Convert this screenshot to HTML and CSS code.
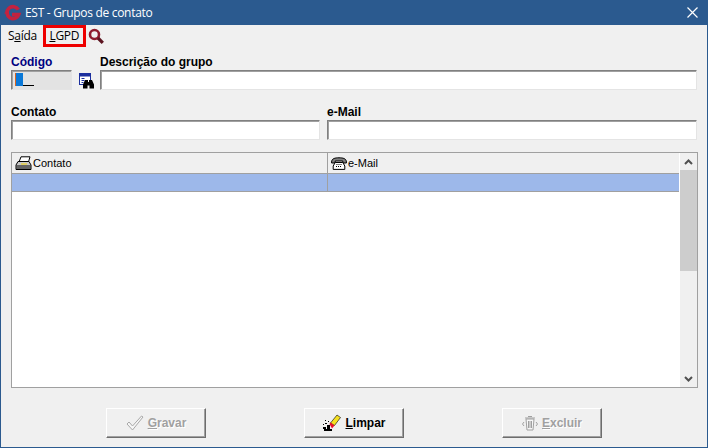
FILE: index.html
```html
<!DOCTYPE html>
<html lang="pt">
<head>
  <meta charset="UTF-8" />
  <title>EST - Grupos de contato</title>
  <link rel="stylesheet" href="styles.css">
</head>
<body>
  <div class="window">
    <div class="titlebar">
      <svg class="app-logo" width="18" height="18" viewBox="0 0 18 18">
        <path d="M15.300 5.600 A6 6 0 1 0 15.800 10.500 L9 10.500" fill="none" stroke="#c4223f" stroke-width="3.600"/>
        <path d="M1 9.500 L6 3.500 L6 9.500 Z" fill="#c4223f"/>
      </svg>
      <span class="title-text">EST - Grupos de contato</span>
      <svg class="close-icon" width="11" height="11" viewBox="0 0 11 11">
        <path d="M.5.5l10 10M10.5.5l-10 10" stroke="#fff" stroke-width="1.2" fill="none"/>
      </svg>
    </div>

    <div class="content">
      <div class="menu">
        <span class="menu-item">S<u>a</u>ída</span>
        <span class="menu-item boxed"><u>L</u>GPD</span>
        <svg class="search-icon" width="16" height="16" viewBox="0 0 16 16">
          <circle cx="6.500" cy="6.500" r="4.500" fill="none" stroke="#8e1c2e" stroke-width="2.600"/>
          <path d="M10 10l4.800 4.800" stroke="#5c1420" stroke-width="3.200"/>
        </svg>
      </div>

      <div class="form-row first">
        <div class="field codigo">
          <label class="label navy">Código</label>
          <div class="input readonly"><span class="caret-block"></span><span class="mask-line"></span></div>
        </div>
        <svg class="binoculars" width="16" height="16" viewBox="0 0 16 16">
          <rect x=".5" y=".5" width="11" height="11" fill="#fff" stroke="#1c2f9e"/>
          <rect x="1" y="1" width="10" height="2.500" fill="#1c2f9e"/>
          <path d="M2.500 5.500h3M2.500 7.500h3M2.500 9.500h2" stroke="#1c2f9e"/>
          <path d="M4 15.500v-4l2-4.500h3v2h1v-2h3l2 4.500v4h-4.500v-3h-2v3z" fill="#000"/>
        </svg>
        <div class="field grow">
          <label class="label">Descrição do grupo</label>
          <div class="input"></div>
        </div>
      </div>

      <div class="form-row second">
        <div class="field contato">
          <label class="label">Contato</label>
          <div class="input"></div>
        </div>
        <div class="field grow">
          <label class="label">e-Mail</label>
          <div class="input"></div>
        </div>
      </div>

      <div class="grid">
        <div class="grid-main">
          <div class="grid-head">
            <div class="col col-contato">
              <svg width="17" height="15" viewBox="0 0 17 15">
                <path d="M4 6L6 .8h9L13.500 6z" fill="#fff" stroke="#000"/>
                <path d="M1 9l2-3.500h11l2 3.500v4.500H1z" fill="#c8c8c8" stroke="#000"/>
                <path d="M1.500 10h14M1.500 12h14" stroke="#000"/>
                <path d="M6 8h6" stroke="#e8d23c" stroke-width="1.400"/>
              </svg>
              Contato
            </div>
            <div class="col">
              <svg width="16" height="13" viewBox="0 0 16 13">
                <path d="M.6 5C.6 1.500 4 .8 8 .8s7.400.7 7.400 4.200v1h-3.600V4H4.200v2H.6z" fill="#808080" stroke="#000"/>
                <path d="M4.200 5.500h7.600l2 3.500v3.400H2.200V9z" fill="#fff" stroke="#000"/>
                <path d="M5.500 7.500h5M5 9.500h6" stroke="#000" stroke-dasharray="1 1"/>
              </svg>
              e-Mail
            </div>
          </div>
          <div class="grid-row">
            <div class="cell-first"></div>
            <div class="cell"></div>
          </div>
        </div>
        <div class="scrollbar">
          <svg class="arrow" width="9" height="6" viewBox="0 0 9 6"><path d="M1 5l3.500-3.500L8 5" fill="none" stroke="#505050" stroke-width="2"/></svg>
          <div class="thumb"></div>
          <div class="track"></div>
          <svg class="arrow" width="9" height="6" viewBox="0 0 9 6"><path d="M1 1l3.500 3.500L8 1" fill="none" stroke="#505050" stroke-width="2"/></svg>
        </div>
      </div>

      <div class="actions">
        <button class="action disabled">
          <svg width="18" height="17" viewBox="0 0 18 17"><path d="M1 9l2-2 3.500 4L15.500 1l1.500 1L6.500 15z" fill="#f6f6f6" stroke="#a8a8a8"/></svg>
          <span><u>G</u>ravar</span>
        </button>
        <button class="action">
          <svg width="19" height="18" viewBox="0 0 19 18">
            <path d="M8.500 9L15 1l3.500 2.500-6 8z" fill="#f5e020" stroke="#000" stroke-width=".6"/>
            <path d="M7.500 10l1-1.500 4 3L10 14.500z" fill="#e8102a"/>
            <path d="M3 6h1v1H3zM6 7h1v1H6zM1 10h1v1H1zM3 9h2v1H3zM2 15h8v2H2zM1 13h3v2H1zM5 11h3v5H5z" fill="#000"/>
          </svg>
          <span><u>L</u>impar</span>
        </button>
        <button class="action disabled">
          <svg width="16" height="16" viewBox="0 0 16 16">
            <path d="M4 4h8l-1 11H5zM3 3h10M6 1.500h4" fill="#f6f6f6" stroke="#a0a0a0"/>
            <path d="M6.500 6v7M8 6v7M9.500 6v7M2 7L.5 9 2 11M14 7l1.500 2L14 11" fill="none" stroke="#a0a0a0"/>
          </svg>
          <span><u>E</u>xcluir</span>
        </button>
      </div>
    </div>
  </div>
</body>
</html>
```

FILE: styles.css
```css
html, body {
  height: 100%;
  margin: 0;
  padding: 0;
  overflow: hidden;
}

.window {
  width: 708px;
  height: 448px;
  box-sizing: border-box;
  display: flex;
  flex-direction: column;
  background-color: #2b5a8f;
  font-family: 'Liberation Sans', Arial, sans-serif;
}

.titlebar {
  height: 25px;
  flex-shrink: 0;
  display: flex;
  align-items: center;
  padding: 0 10px 0 3px;
  color: white;
}

.app-logo {
  margin-right: 4px;
}

.title-text {
  font-family: 'Open Sans', sans-serif;
  font-size: 12px;
  letter-spacing: -0.3px;
  color: #fff;
}

.close-icon {
  margin-left: auto;
}

.content {
  flex: 1;
  margin: 0 1px 1px 1px;
  background-color: #f0f0f0;
  display: flex;
  flex-direction: column;
  padding: 0 10px 0 10px;
}

.menu {
  height: 21px;
  display: flex;
  align-items: center;
  font-size: 12px;
  letter-spacing: -0.3px;
  color: #000;
  font-family: 'Open Sans', sans-serif;
}

.menu-item {
  margin-left: -3px;
}

.boxed {
  box-sizing: border-box;
  width: 43px;
  height: 22px;
  margin-left: 6px;
  line-height: 16px;
  text-align: center;
  border: 3px solid #ee0000;
}

.search-icon {
  margin-left: 2px;
}

.form-row {
  display: flex;
  align-items: flex-end;
}

.form-row.first {
  margin-top: 9px;
}

.form-row.second {
  margin-top: 15px;
  gap: 7px;
}

.field {
  display: flex;
  flex-direction: column;
}

.grow {
  flex: 1;
}

.codigo {
  width: 61px;
}

.contato {
  width: 309px;
}

.label {
  font-size: 12px;
  font-weight: bold;
  line-height: 15px;
  color: #000;
}

.navy {
  color: #000080;
}

.input {
  box-sizing: border-box;
  height: 20px;
  background-color: white;
  border: 1px solid;
  border-color: #808080 #e4e4e4 #e4e4e4 #808080;
  box-shadow: inset 1px 1px 0 #a0a0a0;
  display: flex;
  align-items: flex-end;
}

.readonly {
  background-color: #e3e3e3;
  padding: 0 0 3px 3px;
}

.caret-block {
  width: 7px;
  height: 13px;
  background-color: #0a78d7;
  border-left: 1px solid #d8641e;
}

.mask-line {
  width: 11px;
  height: 1px;
  background-color: #000;
}

.binoculars {
  margin: 0 5px 1px 7px;
}

.grid {
  margin-top: 12px;
  height: 236px;
  box-sizing: border-box;
  width: 687px;
  border: 1px solid #a0a0a0;
  display: flex;
  background-color: white;
}

.grid-main {
  flex: 1;
}

.grid-head {
  height: 20px;
  display: flex;
  background-color: #f0f0f0;
  border-bottom: 1px solid #a0a0a0;
  font-size: 11px;
  line-height: 20px;
  color: #000;
}

.col {
  display: flex;
  align-items: center;
  gap: 1px;
  padding-left: 3px;
  flex: 1;
}

.col-contato {
  flex: none;
  box-sizing: border-box;
  width: 316px;
  border-right: 1px solid #a0a0a0;
}

.grid-row {
  height: 18px;
  box-sizing: border-box;
  display: flex;
  background-color: #9db8ea;
  border-bottom: 1px solid #a0a0a0;
}

.cell-first {
  box-sizing: border-box;
  width: 316px;
  border-right: 1px solid #a0a0a0;
}

.cell {
  flex: 1;
}

.scrollbar {
  width: 17px;
  margin-left: 1px;
  background-color: #f0f0f0;
  display: flex;
  flex-direction: column;
  align-items: center;
}

.arrow {
  flex-shrink: 0;
  margin: 6px 0 5px;
}

.thumb {
  width: 100%;
  height: 101px;
  background-color: #cdcdcd;
}

.track {
  flex: 1;
}

.actions {
  display: flex;
  gap: 98px;
  margin-top: 20px;
  padding-left: 95px;
}

.action {
  box-sizing: border-box;
  width: 100px;
  height: 30px;
  display: flex;
  align-items: center;
  justify-content: center;
  gap: 4px;
  padding: 0;
  font-family: 'Liberation Sans', Arial, sans-serif;
  font-size: 12px;
  font-weight: bold;
  color: #000;
  background-color: #f0f0f0;
  border: 1px solid;
  border-color: #fff #6d6d6d #6d6d6d #fff;
  box-shadow: inset -1px -1px 0 #a0a0a0;
}

.action.disabled {
  color: #a0a0a0;
  text-shadow: 1px 1px 0 #fff;
}
```
